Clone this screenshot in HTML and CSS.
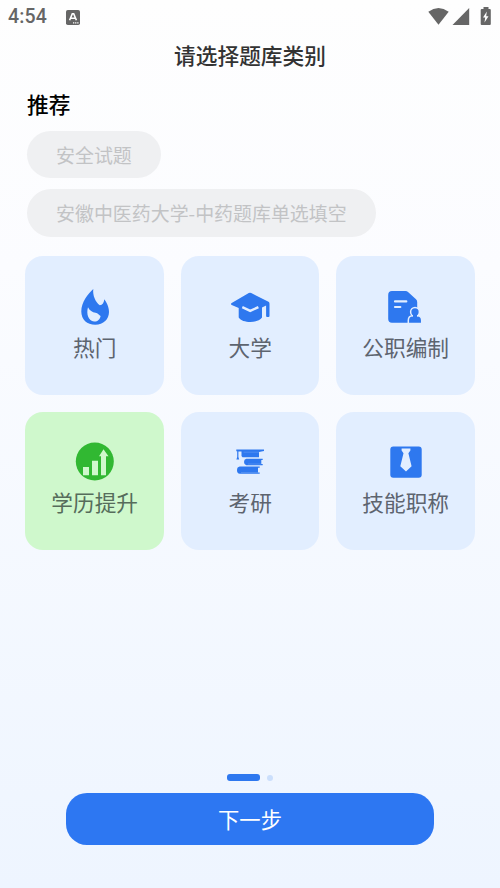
FILE: index.html
```html
<!DOCTYPE html>
<html lang="zh-CN">
<head>
<meta charset="utf-8">
<title>请选择题库类别</title>
<link rel="stylesheet" href="styles.css">
</head>
<body>
<header class="status">
  <span class="clock">4:54</span>
  <svg class="app" viewBox="0 0 14 15"><rect width="14" height="15" rx="1.8" fill="#666"/><path d="M3.6 10.2 6.3 3.8h1.4l2.700 6.400M4.800 8.200h4.400" fill="none" stroke="#fff" stroke-width="1.6"/><path d="M7 12.800h5.500" stroke="#fff" stroke-width="1.2" stroke-dasharray="1.3 .8"/></svg>
  <svg class="system" viewBox="0 0 64 20"><g fill="#666"><path d="M.3 4.8Q10.500-2.600 20.700 4.800L10.500 17.800Z"/><path d="M41.200 1V18H24.500Z"/><path d="M55.500 0h5v2h1.300q1 0 1 1V17q0 1-1 1H53.700q-1 0-1-1V3q0-1 1-1h1.800Z"/></g><path d="M58.800 4.500 55 10.500h2.200L56.500 15.500 60.500 9.200H58.200Z" fill="#fff"/></svg>
</header>
<h1>请选择题库类别</h1>
<section class="recommend">
  <h2>推荐</h2>
  <div class="chips"><span class="chip">安全试题</span><span class="chip">安徽中医药大学-中药题库单选填空</span></div>
</section>
<main class="grid">
  <button class="tile">
    <svg viewBox="0 0 44 44"><path fill="#2e78ef" d="M20.300 4C15 9 8.300 17 8.300 26.500C8.300 34.500 14 39.800 22.300 39.800C30.500 39.800 36 34 36 27C36 21.500 33.500 17.500 31.300 14.200C31 17.500 29.500 19.900 26.800 20.300C22.500 17 19.500 10.500 20.300 4Z"/><path fill="#e2eeff" d="M15 22.200C16.500 25.400 19.500 27.300 22.500 27.700C25 28.200 26.200 30 27.600 31C27 34.800 24.200 36.800 21 36.500C15.500 36 13 29 15 22.200Z"/></svg>
    <span>热门</span>
  </button>
  <button class="tile">
    <svg viewBox="0 0 44 44"><g fill="#2e78ef"><path d="M20.800 8.100q1.200-.6 2.400 0L40.500 16.800q1 .6 1 2V31q0 1-1 1h-1.400q-1 0-1-1V20.500L34 22.400V32.500C30 38.500 14.500 38.500 10.700 32.500V23L3.700 19.900Q2.200 19 3.700 18Z"/></g><path d="m14.300 22.200 7.900 3.700 8.200-3.700" fill="none" stroke="#e2eeff" stroke-width="2.400"/></svg>
    <span>大学</span>
  </button>
  <button class="tile">
    <svg viewBox="0 0 44 44"><path fill="#2e78ef" d="M8 6H21.500Q23 6 24.300 7.300L32 14.300Q33.200 15.500 33.200 17V37.700H8Q4.200 37.700 4.200 34V10Q4.200 6 8 6Z"/><path d="M11 16.400H22.300M11 22H16.300" stroke="#e2eeff" stroke-width="2.200" stroke-linecap="round"/><g fill="#2e78ef" stroke="#e2eeff" stroke-width="1.500"><path d="M24.300 38.500V35.500Q24.300 31 28.500 30.800H33.500Q37.700 31 37.700 35.500V38.500Z"/><circle cx="31" cy="26.900" r="4.400"/></g><path fill="#2e78ef" d="M29 29h4v4h-4z"/></svg>
    <span>公职编制</span>
  </button>
  <button class="tile selected">
    <svg viewBox="0 0 44 44"><circle cx="21.800" cy="21.500" r="19" fill="#31b832"/><path fill="#cff8cc" d="M10 27h6v8.300h-6zM19 20.800h6v14.500h-6zM28 35.300V16.200H26L30.500 9.200 35.500 16.200H33V35.300Z"/></svg>
    <span>学历提升</span>
  </button>
  <button class="tile">
    <svg viewBox="0 0 44 44"><g fill="#2e78ef"><path d="M8.300 9.500H36V11L31 12V17.300H14.500L13.500 16V11.400H10.400V17L11.200 19.500H8.400L9.200 17V11.200H8.300ZM18.300 18.800H34.700V20H33.300V24H34.700V25.200H18.300Q16 24.800 16 22T18.300 18.800ZM11.800 26.500H31.700V27.800H30V32.500H31.700V33.800H11.800Q9 33.500 9 30.200T11.800 26.500Z"/></g><path d="M15.500 12.200H31M20 24H33M13 32.500H30" stroke="#82adf5" stroke-width=".4"/></svg>
    <span>考研</span>
  </button>
  <button class="tile">
    <svg viewBox="0 0 44 44"><rect x="6.300" y="6.500" width="31.400" height="31.200" rx="3" fill="#2e78ef"/><path fill="#e2eeff" d="M17.600 8.500H26.400V10.500L24.400 13.300 27.600 26.200 22 31.600 16.300 26.200 19.500 13.300 17.600 10.500Z"/></svg>
    <span>技能职称</span>
  </button>
</main>
<footer>
  <div class="pager"><i class="current"></i><i></i></div>
  <button class="next">下一步</button>
</footer>
</body>
</html>
```
FILE: styles.css
```css
* { box-sizing: border-box; }
body {
  margin: 0;
  height: 888px;
  overflow: hidden;
  display: flex;
  flex-direction: column;
  background: linear-gradient(#fefefe, #fbfcff 30%, #eef5ff);
  font-family: "Noto Sans CJK SC", sans-serif;
}
button { border: 0; padding: 0; font-family: inherit; }
.status {
  height: 34px;
  padding: 0 8px;
  display: flex;
  align-items: center;
}
.clock { font: 500 19.500px/36px Roboto, sans-serif; color: #666; letter-spacing: .15px; }
.app { width: 14px; height: 15px; margin-left: 18.500px; }
.system { width: 64px; height: 20px; margin: 0 0 0 auto; }
h1 {
  margin: 0;
  font-size: 21.7px;
  line-height: 42px;
  font-weight: 500;
  text-align: center;
  color: #333;
}
.recommend { padding: 12px 27px 0; }
h2 { margin: 0; font-size: 21.7px; line-height: 32px; font-weight: 500; color: #000; }
.chips { display: flex; flex-direction: column; align-items: flex-start; gap: 11px; margin-top: 10.5px; }
.chip {
  height: 47.7px;
  padding: 0 29px;
  border-radius: 24px;
  background: #eff0f2;
  color: #c2c3c5;
  font-size: 18.95px;
  line-height: 48px;
  font-weight: 400;
  white-space: nowrap;
}
.grid {
  display: grid;
  grid-template-columns: repeat(3, 138.500px);
  grid-auto-rows: 138.500px;
  gap: 17px;
  margin: 19.600px 0 0 25.400px;
}
.tile {
  display: flex;
  flex-direction: column;
  align-items: center;
  padding-top: 28.500px;
  border-radius: 18px;
  background: #e2eeff;
  color: #5d646f;
  font-size: 21.700px;
  line-height: 32px;
  font-weight: 400;
}
.tile svg { width: 44px; height: 44px; margin-bottom: 2px; }
.tile.selected { background: #cff8cc; color: #566c5b; }
footer { margin-top: auto; padding: 0 66px 43.500px; }
.pager { display: flex; align-items: center; justify-content: center; gap: 7px; height: 7px; margin-bottom: 11.500px; }
.pager i { width: 6px; height: 6px; border-radius: 3px; background: #cbdffc; }
.pager .current { width: 33px; height: 7px; background: #2e78ef; }
.next {
  display: block;
  width: 100%;
  height: 52px;
  border-radius: 21px;
  background: #2d77f2;
  color: #fff;
  font-size: 21.300px;
  line-height: 52px;
  font-weight: 400;
}
```
